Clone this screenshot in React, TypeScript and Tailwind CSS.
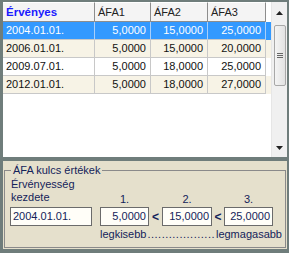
import React from "react";

const cols = [92, 56, 57, 58];
const rows = [
  ["2004.01.01.", "5,0000", "15,0000", "25,0000"],
  ["2006.01.01.", "5,0000", "15,0000", "20,0000"],
  ["2009.07.01.", "5,0000", "18,0000", "25,0000"],
  ["2012.01.01.", "5,0000", "18,0000", "27,0000"],
];
const rowBg = ["bg-[#3399ff] text-white", "bg-[#f7f3e6] text-[#111]", "bg-white text-[#111]", "bg-[#f7f3e6] text-[#111]"];

function Box({ w, text, left }: { w: string; text: string; left?: boolean }) {
  return (
    <div
      className={`${w} h-[19px] border border-[#6b6b6b] bg-[#fffef8] leading-[17px] text-[#14235a] ${
        left ? "pl-[2px] text-left" : "pr-[2px] text-right"
      }`}
    >
      {text}
    </div>
  );
}

export default function App() {
  return (
    <div className="w-[289px] h-[253px] bg-[#6f7d7b] flex flex-col pt-[2px] pl-[3px] pr-[2px] pb-[4px] gap-[4px] font-['Liberation_Sans',Arial,sans-serif] text-[11px] overflow-hidden">
      {/* grid */}
      <div className="h-[155px] bg-white flex shrink-0">
        <div className="w-[268px] flex flex-col">
          <div className="flex h-[20px]">
            {["Érvényes", "ÁFA1", "ÁFA2", "ÁFA3"].map((h, i) => (
              <div
                key={h}
                style={{ width: cols[i] }}
                className={`h-[20px] bg-[#f4f4f4] border-r border-b border-[#8d8d8d] border-t border-t-white pl-[3px] leading-[18px] ${
                  i === 0 ? "font-bold text-[#1a1aff] text-[11.5px]" : "text-[#222]"
                }`}
              >
                {h}
              </div>
            ))}
          </div>
          {rows.map((r, ri) => (
            <div key={ri} className={`flex h-[18px] ${rowBg[ri]}`}>
              {r.map((c, ci) => (
                <div
                  key={ci}
                  style={{ width: cols[ci] }}
                  className={`h-[18px] border-r border-b ${ri === 0 ? "border-r-[#a9cffa] border-b-[#c8c8c8]" : "border-[#c8c8c8]"} leading-[17px] ${
                    ci === 0 ? "pl-[3px] text-left" : "pr-[4px] text-right"
                  }`}
                >
                  {c}
                </div>
              ))}
            </div>
          ))}
        </div>
        {/* scrollbar */}
        <div className="w-[16px] bg-[#f0f0f0] border-l border-[#e6e6e6] flex flex-col items-center">
          <div className="h-[22px] flex items-center justify-center">
            <svg width="7" height="4" viewBox="0 0 7 4">
              <path d="M3.5 0 L7 4 L0 4 Z" fill="#222" />
            </svg>
          </div>
          <div className="mt-[1px] w-[12px] h-[61px] rounded-[2px] border border-[#a8a8a8] bg-gradient-to-r from-[#f4f4f4] to-[#e2e2e2] flex flex-col items-center justify-center gap-[1px]">
            <div className="w-[6px] h-[1px] bg-[#666]" />
            <div className="w-[6px] h-[1px] bg-[#666]" />
            <div className="w-[6px] h-[1px] bg-[#666]" />
          </div>
          <div className="flex-1" />
          <div className="h-[18px] flex items-center justify-center">
            <svg width="7" height="4" viewBox="0 0 7 4">
              <path d="M0 0 L7 0 L3.5 4 Z" fill="#222" />
            </svg>
          </div>
        </div>
      </div>
      {/* panel */}
      <div className="flex-1 bg-[#e5e0cc] flex flex-col">
        <fieldset className="flex-1 mt-[3px] mx-[1px] mb-[1px] border border-[#8a8a8a] min-w-0">
          <legend className="ml-[6px] px-[2px] leading-[12px] text-[#14235a]">ÁFA kulcs értékek</legend>
          <div className="pl-[5px] text-[#14235a]">
            <div className="flex items-end h-[28px] mt-[2px]">
              <div className="w-[90px] self-start leading-[13px] pl-[1px]">
                <div>Érvényesség</div>
                <div>kezdete</div>
              </div>
              <div className="w-[49px] text-center leading-[13px]">1.</div>
              <div className="w-[13px]" />
              <div className="w-[50px] text-center leading-[13px]">2.</div>
              <div className="w-[12px]" />
              <div className="w-[49px] text-center leading-[13px]">3.</div>
            </div>
            <div className="flex items-center mt-[1px]">
              <Box w="w-[82px]" text="2004.01.01." left />
              <div className="w-[8px]" />
              <Box w="w-[49px]" text="5,0000" />
              <div className="w-[13px] text-center font-bold text-[12px]">&lt;</div>
              <Box w="w-[50px]" text="15,0000" />
              <div className="w-[12px] text-center font-bold text-[12px]">&lt;</div>
              <Box w="w-[49px]" text="25,0000" />
            </div>
            <div className="flex justify-between ml-[90px] w-[182px] leading-[13px] mt-[2px] whitespace-nowrap">
              <span>legkisebb</span>
              <span className="tracking-[0.5px]">...................</span>
              <span>legmagasabb</span>
            </div>
          </div>
        </fieldset>
      </div>
    </div>
  );
}
